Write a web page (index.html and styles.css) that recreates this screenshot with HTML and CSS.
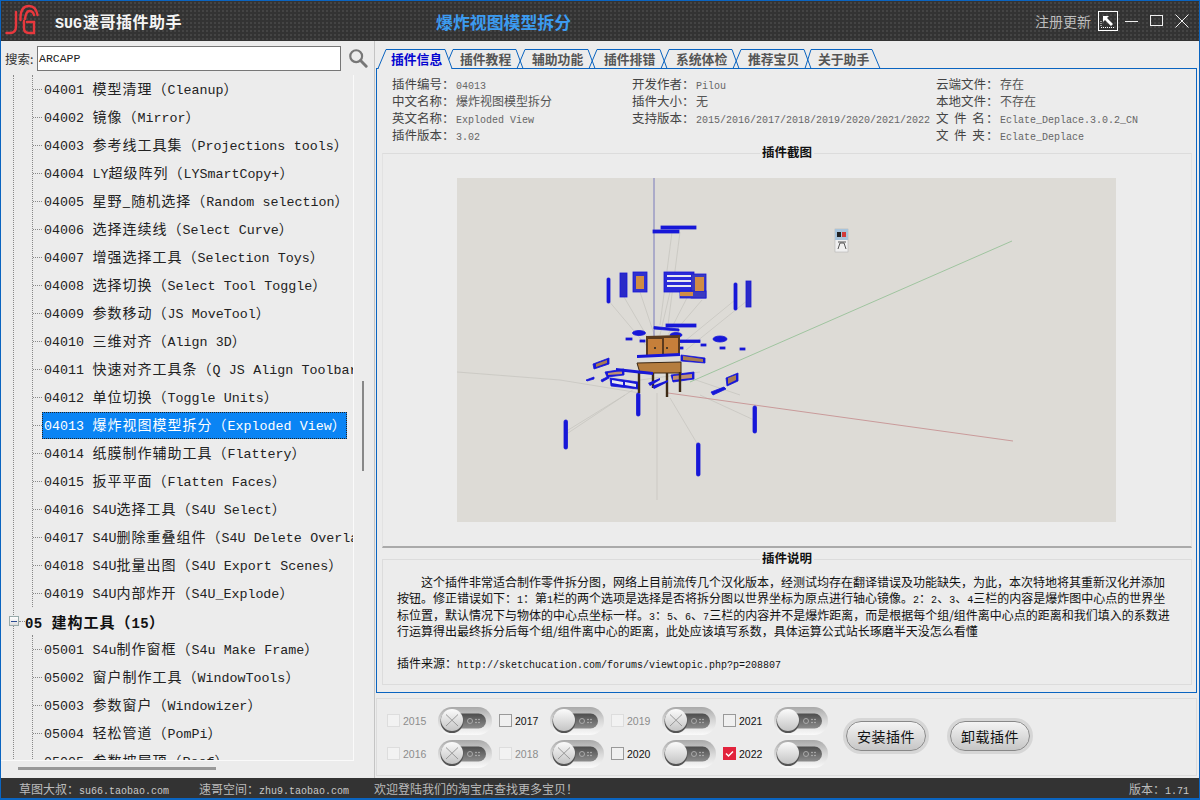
FILE: index.html
```html
<!DOCTYPE html>
<html lang="zh-CN">
<head>
<meta charset="utf-8">
<title>SUG速哥插件助手</title>
<link rel="stylesheet" href="styles.css">
</head>
<body>
<svg class="defs" width="0" height="0" aria-hidden="true">
  <defs>
    <linearGradient id="gp" x1="0" y1="0" x2="0" y2="1"><stop offset="0" stop-color="#a9a9a9"/><stop offset=".5" stop-color="#d8d8d8"/><stop offset="1" stop-color="#fafafa"/></linearGradient>
    <linearGradient id="gt" x1="0" y1="0" x2="0" y2="1"><stop offset="0" stop-color="#4d4d4d"/><stop offset="1" stop-color="#8c8c8c"/></linearGradient>
    <linearGradient id="gk" x1="0" y1="0" x2="0" y2="1"><stop offset="0" stop-color="#fbfbfb"/><stop offset="1" stop-color="#c4c4c4"/></linearGradient>
    <symbol id="sw" viewBox="0 0 54 28">
      <rect x="0" y="0" width="54" height="28" rx="14" fill="url(#gp)"/>
      <rect x="16" y="6.500" width="32" height="15" rx="7.500" fill="url(#gt)"/>
      <circle cx="32" cy="14" r="2.500" fill="none" stroke="#aaa"/>
      <circle cx="38" cy="12.500" r=".8" fill="#bbb"/><circle cx="41" cy="12.500" r=".8" fill="#bbb"/>
      <circle cx="38" cy="15.500" r=".8" fill="#bbb"/><circle cx="41" cy="15.500" r=".8" fill="#bbb"/>
      <circle cx="14" cy="14.500" r="11.500" fill="#555"/>
      <circle cx="14" cy="13" r="11" fill="url(#gk)"/>
    </symbol>
    <symbol id="swx" viewBox="0 0 54 28">
      <use href="#sw"/>
      <path d="M8 7.500 L20 19 M20 7.500 L8 19" stroke="#999" stroke-width="1" fill="none"/>
    </symbol>
  </defs>
</svg>
<div class="app">
  <header class="titlebar">
    <svg class="logo" width="46" height="40" viewBox="1 1 46 40">
      <g fill="none" stroke="#e8383d" stroke-width="2.400" stroke-linecap="round">
        <path d="M16 12 V26 Q16 33 10 33 H6.500"/>
        <path d="M20.500 20 V17 Q21 6 29 6 Q36 6 37.500 15"/>
        <path d="M25 19 Q26 11 29.500 11 Q33 11 34 15"/>
        <path d="M24 21 V28 Q24 33 29 33 H34 V22 H27"/>
      </g>
    </svg>
    <div class="app-name"><span class="an-en">SUG</span>速哥插件助手</div>
    <div class="doc-name">爆炸视图模型拆分</div>
    <div class="register">注册更新</div>
    <svg class="ctl ctl-box" width="20" height="20" viewBox="0 0 20 20">
      <rect x=".5" y=".5" width="19" height="19" fill="none" stroke="#fff"/>
      <path d="M5 5 H11 L9 7 L15 13 L13 15 L7 9 L5 11 Z" fill="#fff"/>
      <path d="M3 16.500 H17 M3 10 V16" stroke="#fff" stroke-dasharray="1 1" fill="none"/>
    </svg>
    <svg class="ctl" width="14" height="14" viewBox="0 0 14 14"><path d="M0 7.500 H13" stroke="#eee" fill="none"/></svg>
    <svg class="ctl" width="14" height="14" viewBox="0 0 14 14"><rect x=".5" y="1.500" width="12" height="10" fill="none" stroke="#eee"/></svg>
    <svg class="ctl" width="14" height="14" viewBox="0 0 14 14"><path d="M.5 .5 L13.500 13.500 M13.500 .5 L.5 13.500" stroke="#eee" fill="none"/></svg>
  </header>

  <div class="middle">
    <aside class="left">
      <div class="search">
        <span class="search-label">搜索:</span>
        <div class="search-input">ARCAPP</div>
        <svg width="20" height="20" viewBox="0 0 22 22"><circle cx="9" cy="9" r="6.500" fill="none" stroke="#777" stroke-width="2.400"/><path d="M13.800 13.800 L20 20" stroke="#777" stroke-width="3.200" stroke-linecap="round"/></svg>
      </div>
      <div class="tree-wrap">
        <div class="tree">
          <div class="group">
            <ul class="items">
              <li class="row"><span class="lb">04001 <span class="z">模型清理（</span>Cleanup<span class="z">）</span></span></li>
              <li class="row"><span class="lb">04002 <span class="z">镜像（</span>Mirror<span class="z">）</span></span></li>
              <li class="row"><span class="lb">04003 <span class="z">参考线工具集（</span>Projections tools<span class="z">）</span></span></li>
              <li class="row"><span class="lb">04004 LY<span class="z">超级阵列（</span>LYSmartCopy+<span class="z">）</span></span></li>
              <li class="row"><span class="lb">04005 <span class="z">星野_随机选择（</span>Random selection<span class="z">）</span></span></li>
              <li class="row"><span class="lb">04006 <span class="z">选择连续线（</span>Select Curve<span class="z">）</span></span></li>
              <li class="row"><span class="lb">04007 <span class="z">增强选择工具（</span>Selection Toys<span class="z">）</span></span></li>
              <li class="row"><span class="lb">04008 <span class="z">选择切换（</span>Select Tool Toggle<span class="z">）</span></span></li>
              <li class="row"><span class="lb">04009 <span class="z">参数移动（</span>JS MoveTool<span class="z">）</span></span></li>
              <li class="row"><span class="lb">04010 <span class="z">三维对齐（</span>Align 3D<span class="z">）</span></span></li>
              <li class="row"><span class="lb">04011 <span class="z">快速对齐工具条（</span>Q JS Align Toolbar<span class="z">）</span></span></li>
              <li class="row"><span class="lb">04012 <span class="z">单位切换（</span>Toggle Units<span class="z">）</span></span></li>
              <li class="row"><span class="lb sel">04013 <span class="z">爆炸视图模型拆分（</span>Exploded View<span class="z">）</span></span></li>
              <li class="row"><span class="lb">04014 <span class="z">纸膜制作辅助工具（</span>Flattery<span class="z">）</span></span></li>
              <li class="row"><span class="lb">04015 <span class="z">扳平平面（</span>Flatten Faces<span class="z">）</span></span></li>
              <li class="row"><span class="lb">04016 S4U<span class="z">选择工具（</span>S4U Select<span class="z">）</span></span></li>
              <li class="row"><span class="lb">04017 S4U<span class="z">删除重叠组件（</span>S4U Delete Overlap<span class="z">）</span></span></li>
              <li class="row"><span class="lb">04018 S4U<span class="z">批量出图（</span>S4U Export Scenes<span class="z">）</span></span></li>
              <li class="row"><span class="lb">04019 S4U<span class="z">内部炸开（</span>S4U_Explode<span class="z">）</span></span></li>
            </ul>
            <div class="head"><span class="minus"></span><span class="head-dots"></span><span class="head-text">05 <span class="z">建构工具（</span>15<span class="z">）</span></span></div>
            <ul class="items">
              <li class="row"><span class="lb">05001 S4u<span class="z">制作窗框（</span>S4u Make Frame<span class="z">）</span></span></li>
              <li class="row"><span class="lb">05002 <span class="z">窗户制作工具（</span>WindowTools<span class="z">）</span></span></li>
              <li class="row"><span class="lb">05003 <span class="z">参数窗户（</span>Windowizer<span class="z">）</span></span></li>
              <li class="row"><span class="lb">05004 <span class="z">轻松管道（</span>PomPi<span class="z">）</span></span></li>
              <li class="row"><span class="lb">05005 <span class="z">参数坡屋顶（</span>Roof<span class="z">）</span></span></li>
            </ul>
          </div>
        </div>
        <div class="vcol"><div class="vbar"></div></div>
      </div>
      <div class="hcol"><div class="hbar"></div></div>
    </aside>

    <main class="right">
      <nav class="tabs">
        <svg class="tab-lines" width="520" height="22" viewBox="376 47 520 22">
          <g fill="none" stroke="#0a64c0">
            <path d="M446 68.500 L454 49.500 H517 L524 68.500"/>
            <path d="M518 68.500 L526 49.500 H589 L596 68.500"/>
            <path d="M590 68.500 L598 49.500 H661 L668 68.500"/>
            <path d="M662 68.500 L670 49.500 H733 L740 68.500"/>
            <path d="M734 68.500 L742 49.500 H805 L812 68.500"/>
            <path d="M806 68.500 L812 49.500 H873 L881 68.500"/>
            <path d="M379 68.500 L387 49.500 H446 L453 68.500" fill="#ececec"/>
          </g>
          <path d="M380 68.500 H452" stroke="#ececec" fill="none"/>
        </svg>
        <span class="tab active">插件信息</span>
        <span class="tab">插件教程</span>
        <span class="tab">辅助功能</span>
        <span class="tab">插件排错</span>
        <span class="tab">系统体检</span>
        <span class="tab">推荐宝贝</span>
        <span class="tab last">关于助手</span>
      </nav>
      <section class="panel">
        <div class="info">
          <div class="cell"><span class="k">插件编号：</span><span class="v m">04013</span></div>
          <div class="cell"><span class="k">开发作者：</span><span class="v m">Pilou</span></div>
          <div class="cell"><span class="k">云端文件：</span><span class="v">存在</span></div>
          <div class="cell"><span class="k">中文名称：</span><span class="v">爆炸视图模型拆分</span></div>
          <div class="cell"><span class="k">插件大小：</span><span class="v">无</span></div>
          <div class="cell"><span class="k">本地文件：</span><span class="v">不存在</span></div>
          <div class="cell"><span class="k">英文名称：</span><span class="v m">Exploded View</span></div>
          <div class="cell"><span class="k">支持版本：</span><span class="v m">2015/2016/2017/2018/2019/2020/2021/2022</span></div>
          <div class="cell"><span class="k wide">文 件 名：</span><span class="v m">Eclate_Deplace.3.0.2_CN</span></div>
          <div class="cell"><span class="k">插件版本：</span><span class="v m">3.02</span></div>
          <div class="cell"></div>
          <div class="cell"><span class="k wide">文 件 夹：</span><span class="v m">Eclate_Deplace</span></div>
        </div>
        <div class="group-box shot">
          <div class="gtitle"><span>插件截图</span></div>
          <svg class="picture" width="659" height="344" viewBox="457 178 659 344">
            <rect x="457" y="178" width="659" height="344" fill="#dddbd6"/>
            <g fill="none" stroke="#c4c3bd" stroke-width=".7">
              <path d="M608 300 L650 350 M624 297 L652 345 M640 292 L656 340 M672 232 L660 325 M680 232 L668 325 M670 292 L660 335 M690 292 L668 335 M702 300 L672 335 M735 300 L680 345 M748 300 L686 350"/>
              <path d="M565 435 L640 385 M565 432 L625 395 M657 393 V500 M698 445 L670 398 M754 420 L700 395 M560 380 L640 393 M457 372 L560 380"/>
              <path d="M640 380 L700 372 M690 378 L740 395"/>
            </g>
            <path d="M654 178 V336" stroke="#8a8ac0" stroke-width="1.200"/>
            <path d="M1012 241 L690 382" stroke="#9fc49f" stroke-width="1"/>
            <path d="M668 393 L1013 441" stroke="#c99a9a" stroke-width="1"/>
            <g fill="#1717d8" stroke="#1717d8" stroke-width=".8">
              <rect x="661" y="226" width="35" height="3"/><rect x="653" y="230" width="26" height="3"/>
              <rect x="607" y="278" width="3" height="25" rx="1"/>
              <rect x="620" y="273" width="7" height="24" fill="#2a2ac8"/>
              <rect x="633" y="272" width="14" height="20" fill="#3030d0"/>
              <rect x="664" y="272" width="30" height="20" fill="#2a2ad8"/>
              <rect x="691" y="274" width="15" height="24" fill="#3a3ac0"/>
              <rect x="680" y="291" width="26" height="7" fill="#3a3ac0"/>
              <rect x="734" y="283" width="3" height="27" rx="1"/>
              <rect x="746" y="281" width="5" height="26" fill="#2a2ac8"/>
              <path d="M654 326.500 L679 329 V331 L654 329 Z"/><rect x="666" y="324" width="30" height="3"/>
              <ellipse cx="639" cy="333" rx="6.500" ry="2.500"/><ellipse cx="720" cy="339" rx="7" ry="3"/><ellipse cx="676" cy="335" rx="6" ry="2.500"/>
              <rect x="626" y="338" width="6" height="2"/><rect x="640" y="340" width="5" height="2"/>
              <rect x="680" y="340" width="20" height="2.500"/><rect x="701" y="344" width="5" height="2"/><rect x="720" y="347" width="5" height="2"/><rect x="740" y="348" width="5" height="2"/><rect x="678" y="347" width="5" height="2"/>
              <path d="M681 355 L705 358 V363 L681 361 Z"/>
              <path d="M593 364 L609 358 V364 L594 369 Z"/>
              <path d="M605 372 L624 369 V375 L607 377 Z"/>
              <path d="M671 375 L694 372 V379 L673 382 Z"/>
              <path d="M726 378 L738 373 V381 L727 386 Z"/>
              <path d="M586 380 L594 377 V379 L587 381 Z"/>
              <path d="M601 380 L609 376 V378 L602 382 Z"/>
              <path d="M610 378 L638 382 V389 L611 386 Z"/>
              <path d="M711 392 L724 387 L726 389 L713 395 Z"/>
              <rect x="636.500" y="393" width="3.500" height="23" rx="1.500"/>
              <rect x="753" y="406" width="3.500" height="27" rx="1.500"/>
              <rect x="564" y="420" width="3.500" height="29" rx="1.500"/>
              <rect x="696.500" y="443" width="3.500" height="33" rx="1.500"/>
            </g>
            <g fill="#d08c44">
              <rect x="636" y="276" width="8" height="13"/>
              <rect x="695" y="277" width="9" height="14"/>
              <rect x="680" y="292" width="13" height="4"/>
              <path d="M596 364 L607 360 V363 L596 367 Z" fill="#a87c50"/>
              <path d="M608 373 L622 371 V374 L608 375 Z" fill="#c09070"/>
              <path d="M673 376 L692 374 V378 L673 380 Z" fill="#c09070"/>
              <path d="M728 378 L736 375 V380 L728 384 Z" fill="#a87c50"/>
              <path d="M683 356 L703 359 V362 L683 360 Z" fill="#a87c50"/>
            </g>
            <g fill="#e8e8f0">
              <rect x="667" y="275" width="24" height="2"/><rect x="667" y="280" width="24" height="2"/><rect x="667" y="285" width="24" height="2"/>
              <path d="M612 380 L623 382 V385 L612 383 Z"/><path d="M625 382 L636 384 V387 L625 385 Z"/>
            </g>
            <path d="M646 336 L680 335 V355 L646 357 Z" fill="#5a3a1e"/>
            <rect x="648" y="339" width="14" height="16" fill="#c67f3a"/><rect x="664" y="338" width="14" height="16" fill="#c67f3a"/>
            <circle cx="655" cy="348" r="1" fill="#222"/><circle cx="667" cy="348" r="1" fill="#222"/>
            <path d="M637 363 L681 362 V373 L640 373 Z" fill="#b57d3e" stroke="#3c2814"/>
            <path d="M639 372 V393 M653 373 V388 M667 373 V397 M680 372 V392" stroke="#3d2a15" stroke-width="2.400" fill="none"/>
            <g fill="#1717d8">
              <path d="M637 355 L680 353 V356 L637 358 Z"/>
              <path d="M616 368 L653 372 V375 L616 371 Z"/>
              <path d="M648 383 L660 378 V380 L650 386 Z"/>
              <path d="M652 386 L668 380 V382 L654 389 Z"/>
            </g>
            <rect x="835" y="229" width="13" height="23" fill="#f0f0f0" stroke="#b4b4b4" stroke-width=".6"/>
            <rect x="835" y="229" width="13" height="11" fill="#a8c4dc"/>
            <rect x="837" y="232" width="4" height="5" fill="#222"/><rect x="842" y="232" width="4" height="5" fill="#d23b3b"/>
            <path d="M838 249 L840 243 H844 L846 249 M838 242 H846" stroke="#555" fill="none"/>
          </svg>
        </div>
        <div class="group-box desc">
          <div class="gtitle"><span>插件说明</span></div>
          <p class="desc-text"><span class="ind">这个插件非常适合制作零件拆分图，网络上目前流传几个汉化版本，经测试均存在翻译错误及功能缺失，为此，本次特地将其重新汉化并添加</span><br>按钮。修正错误如下：<i class="m">1</i>：第<i class="m">1</i>栏的两个选项是选择是否将拆分图以世界坐标为原点进行轴心镜像。<i class="m">2</i>：<i class="m">2</i>、<i class="m">3</i>、<i class="m">4</i>三栏的内容是爆炸图中心点的世界坐<br>标位置，默认情况下与物体的中心点坐标一样。<i class="m">3</i>：<i class="m">5</i>、<i class="m">6</i>、<i class="m">7</i>三栏的内容并不是爆炸距离，而是根据每个组/组件离中心点的距离和我们填入的系数进<br>行运算得出最终拆分后每个组/组件离中心的距离，此处应该填写系数，具体运算公式站长琢磨半天没怎么看懂<br><br>插件来源：<i class="m">http://sketchucation.com/forums/viewtopic.php?p=208807</i></p>
        </div>
      </section>
      <section class="versions">
        <div class="ver-grid">
          <div class="ver off"><span class="cb"></span><span class="yr">2015</span><svg class="sw" width="54" height="28"><use href="#swx"/></svg></div>
          <div class="ver"><span class="cb"></span><span class="yr">2017</span><svg class="sw" width="54" height="28"><use href="#sw"/></svg></div>
          <div class="ver off"><span class="cb"></span><span class="yr">2019</span><svg class="sw" width="54" height="28"><use href="#swx"/></svg></div>
          <div class="ver"><span class="cb"></span><span class="yr">2021</span><svg class="sw" width="54" height="28"><use href="#sw"/></svg></div>
          <div class="ver off"><span class="cb"></span><span class="yr">2016</span><svg class="sw" width="54" height="28"><use href="#swx"/></svg></div>
          <div class="ver off"><span class="cb"></span><span class="yr">2018</span><svg class="sw" width="54" height="28"><use href="#swx"/></svg></div>
          <div class="ver"><span class="cb"></span><span class="yr">2020</span><svg class="sw" width="54" height="28"><use href="#sw"/></svg></div>
          <div class="ver"><span class="cb checked"><svg width="13" height="13" viewBox="0 0 13 13"><path d="M3 6.500 L5.500 9 L10 4.500" fill="none" stroke="#fff" stroke-width="1.500"/></svg></span><span class="yr">2022</span><svg class="sw" width="54" height="28"><use href="#sw"/></svg></div>
        </div>
        <button class="btn">安装插件</button>
        <button class="btn">卸载插件</button>
      </section>
    </main>
  </div>

  <footer class="status">
    <span class="st st1">草图大叔：<i class="m">su66.taobao.com</i></span>
    <span class="st st2">速哥空间：<i class="m">zhu9.taobao.com</i></span>
    <span class="st st3">欢迎登陆我们的淘宝店查找更多宝贝！</span>
    <span class="st st4">版本：<i class="m">1.71</i></span>
  </footer>
</div>
</body>
</html>
```

FILE: styles.css
```css
* { box-sizing: border-box; }
html, body { margin: 0; padding: 0; }
body { width: 1200px; height: 800px; overflow: hidden; font-family: "Noto Sans CJK SC", "Liberation Sans", sans-serif; font-size: 12px; color: #111; background: #ececec; }
.defs { display: block; height: 0; }
ul { list-style: none; margin: 0; padding: 0; }
i { font-style: normal; }
.m { font-family: "Liberation Mono", "Noto Sans CJK SC", monospace; font-size: 10px; }

.app { width: 1200px; height: 800px; display: flex; flex-direction: column; border: 1px solid #0a64c0; border-bottom-width: 2px; background: #ececec; }

.titlebar { height: 40px; flex: none; display: flex; align-items: center; background-color: #333; background-image: radial-gradient(#444 1px, transparent 1.2px); background-size: 4px 4px; color: #fff; }
.logo { flex: none; margin-right: 8px; }
.app-name { width: 128px; font-size: 16px; letter-spacing: .5px; white-space: nowrap; color: #f4f4f4; font-weight: 700; }
.an-en { font-family: "Liberation Mono", monospace; font-size: 15px; letter-spacing: 0; margin-right: 1px; }
.doc-name { margin-left: 253px; font-size: 16.900px; font-weight: 700; color: #3c9bf0; white-space: nowrap; }
.register { margin-left: auto; font-size: 14px; color: #bdbdbd; white-space: nowrap; margin-right: 7px; }
.ctl { flex: none; margin-right: 11px; }
.ctl:last-child { margin-right: 10px; }
.ctl-box { margin-right: 7px; }

.middle { flex: 1; display: flex; min-height: 0; }
.left { width: 374px; flex: none; display: flex; flex-direction: column; border-right: 1px solid #c4c4c4; }
.search { height: 34px; flex: none; display: flex; align-items: center; padding-left: 4px; }
.search-label { width: 32px; color: #333; font-size: 12.500px; }
.search-input { width: 304px; height: 25px; background: #fff; border: 1px solid #777; font-family: "Liberation Mono", monospace; font-size: 11.500px; line-height: 23px; padding-left: 1px; color: #222; margin-right: 7px; }
.tree-wrap { height: 686px; flex: none; display: flex; }
.tree { width: 353px; height: 686px; flex: none; overflow: hidden; border-right: 1px solid #fafafa; border-bottom: 1px solid #fafafa; }
.group { margin-left: 12px; border-left: 1px dotted #888; }
.items { margin-left: 18px; border-left: 1px dotted #888; }
.row { height: 28px; display: flex; align-items: center; white-space: nowrap; font-family: "Liberation Mono", monospace; font-size: 13.330px; color: #222; }
.row::before { content: ""; width: 9px; flex: none; border-top: 1px dotted #888; }
.lb { height: 27px; line-height: 25px; padding-left: 2px; flex: none; word-spacing: .4px; }
.z { font-family: "Noto Sans CJK SC", sans-serif; font-size: 14px; letter-spacing: 1px; }
.sel { width: 305px; overflow: hidden; background: #0a84f4; color: #fff; outline: 1px dotted #222; outline-offset: -1px; }
.head { height: 28px; display: flex; align-items: center; white-space: nowrap; font-family: "Liberation Mono", monospace; font-size: 14px; font-weight: 700; color: #111; }
.minus { width: 10px; height: 10px; flex: none; margin-left: -5px; background: linear-gradient(#fff, #ddd); border: 1px solid #9aa; display: flex; align-items: center; justify-content: center; }
.minus::before { content: ""; width: 6px; height: 1px; background: #2a4a90; }
.head-dots { width: 6px; border-top: 1px dotted #888; flex: none; }
.head-text { letter-spacing: .4px; }
.head-text .z { font-weight: 700; font-size: 15px; letter-spacing: 1px; }
.vcol { width: 20px; flex: none; padding: 306px 0 0 8px; }
.vbar { width: 2px; height: 90px; background: #888; }
.hcol { padding: 6px 0 0 17px; }
.hbar { width: 198px; height: 3px; background: #999; }

.right { flex: 1; min-width: 0; display: flex; flex-direction: column; padding-left: 1px; }
.tabs { position: relative; height: 21px; flex: none; margin-top: 6px; display: flex; padding-left: 15px; gap: 21px; align-items: center; }
.tab-lines { position: absolute; left: -1px; top: 0; overflow: visible; }
.tab { position: relative; width: 51px; font-size: 12.800px; font-weight: 700; color: #555; white-space: nowrap; line-height: 21px; padding-top: 1px; }
.tab.active { color: #0505d0; margin-right: -3px; }
.tab.last { margin-left: -2px; }
.panel { flex: none; height: 625px; margin-right: 2px; border: 1px solid #0a64c0; display: flex; flex-direction: column; }
.info { display: grid; grid-template-columns: 240px 304px 1fr; grid-auto-rows: 17px; padding: 6px 0 0 15px; flex: none; height: 75px; }
.cell { display: flex; align-items: baseline; white-space: nowrap; }
.k { width: 64px; flex: none; font-size: 12.500px; color: #444; line-height: 17px; }
.k.wide { letter-spacing: 1.400px; }
.v { color: #555; line-height: 17px; }
.v.m { color: #666; }

.group-box { margin: 0 4px 0 5px; border: 1px solid #dcdcdc; flex: none; }
.gtitle { height: 14px; margin-top: -9px; text-align: center; line-height: 14px; font-weight: 700; font-size: 12.500px; color: #111; }
.gtitle span { background: #ececec; padding: 0 2px; }
.shot { margin-top: 9px; height: 395px; border-bottom: 2px solid #aaa; border-left-color: #e2e2e2; border-right-color: #e2e2e2; display: flex; flex-direction: column; align-items: center; }
.shot .gtitle { align-self: stretch; }
.picture { display: block; margin: 19px 2px 0 0; flex: none; filter: blur(.35px); }
.desc { margin-top: 11px; height: 126px; }
.desc-text { margin: 0; padding: 9px 0 0 14px; line-height: 16.300px; font-size: 12px; white-space: nowrap; color: #111; }
.desc-text .m { line-height: 1; }
.ind { padding-left: 24px; }

.versions { flex: none; height: 78px; margin: 5px 2px 0 0; border: 1px solid #dcdcdc; display: flex; align-items: center; }
.ver-grid { width: 448px; flex: none; margin-left: 10px; display: grid; grid-template-columns: repeat(4, 112px); grid-auto-rows: 28px; row-gap: 5px; }
.ver { display: flex; align-items: center; }
.cb { width: 13px; height: 13px; flex: none; background: #f0f0f0; border: 1px solid #999; }
.off .cb { border-color: #ddd; background: #f2f2f2; }
.cb.checked { border: 0; background: #e2233c; display: block; }
.cb svg { display: block; }
.yr { width: 38px; flex: none; padding-left: 3px; font-family: "Liberation Sans", sans-serif; font-size: 10.500px; color: #111; }
.off .yr { color: #8c8c8c; }
.sw { flex: none; display: block; }
.btn { width: 80px; height: 30px; flex: none; margin: 0 0 2px 24px; border-radius: 15px; border: 1px solid #888; background: linear-gradient(#f4f4f4, #c6c6c6); box-shadow: 0 0 0 3px #d6d6d6; font-family: "Noto Sans CJK SC", sans-serif; font-size: 14px; letter-spacing: .5px; color: #111; padding: 0; }
.ver-grid + .btn { margin-left: 11px; }

.status { height: 20px; flex: none; margin-top: 0; background: #333; display: flex; align-items: center; color: #bbb; white-space: nowrap; font-size: 12px; padding-left: 18px; }
.st .m { color: #c8c8c8; }
.st2 { margin-left: 30px; }
.st3 { margin-left: 25px; }
.st4 { margin-left: auto; margin-right: 10px; }
```
